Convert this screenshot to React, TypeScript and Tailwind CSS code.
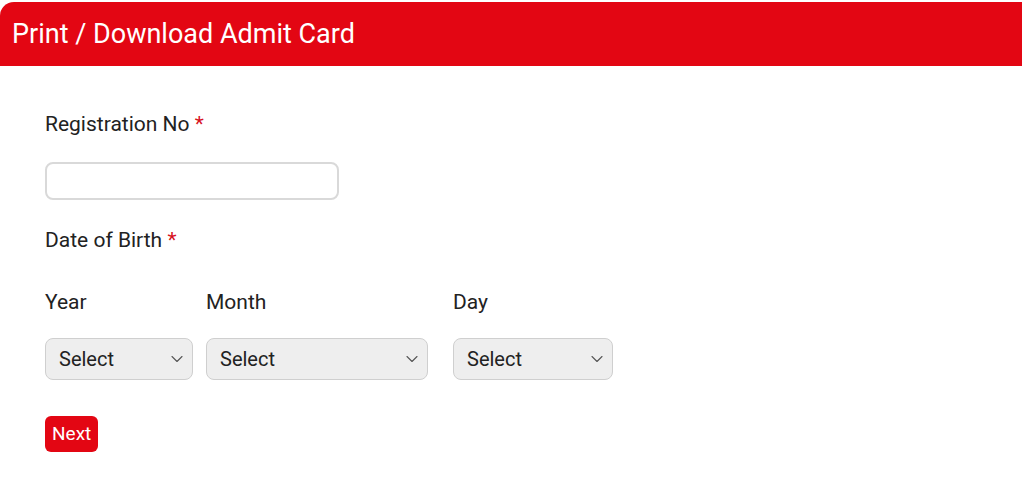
import { ChevronDown } from "lucide-react";

function SelectBox({ width }: { width: string }) {
  return (
    <div
      className={`flex h-[42px] ${width} items-center justify-between rounded-lg border border-[#cfcfcf] bg-[#eeeeee] pl-[13px] pr-[5px] text-[20px] text-[#222]`}
    >
      <span>Select</span>
      <ChevronDown className="h-[20px] w-[20px] text-[#555]" strokeWidth={1.3} />
    </div>
  );
}

export default function App() {
  return (
    <div className="min-h-[479px] bg-white font-['Roboto',sans-serif]">
      <div className="pt-[2px] pr-[2px]">
        <div className="flex h-[64px] items-center rounded-tl-[14px] bg-[#e30613] pl-[12px]">
          <h1 className="text-[27px] leading-none text-white">Print / Download Admit Card</h1>
        </div>
      </div>

      <div className="pl-[45px]">
        <div className="mt-[48px] text-[21px] leading-none text-[#222]">
          Registration No <span className="text-[#d7131f]">*</span>
        </div>
        <div className="mt-[27px] h-[38px] w-[294px] rounded-lg border-2 border-[#d9d9d9] bg-white" />

        <div className="mt-[30px] text-[21px] leading-none text-[#222]">
          Date of Birth <span className="text-[#d7131f]">*</span>
        </div>

        <div className="mt-[41px] flex text-[21px] leading-none text-[#222]">
          <div className="w-[161px]">Year</div>
          <div className="w-[247px]">Month</div>
          <div>Day</div>
        </div>

        <div className="mt-[25px] flex">
          <SelectBox width="w-[148px]" />
          <div className="ml-[13px]">
            <SelectBox width="w-[222px]" />
          </div>
          <div className="ml-[25px]">
            <SelectBox width="w-[160px]" />
          </div>
        </div>

        <button
          type="button"
          className="mt-[36px] h-[36px] rounded-md bg-[#e30613] px-[7px] text-[19px] text-white"
        >
          Next
        </button>
      </div>
    </div>
  );
}
